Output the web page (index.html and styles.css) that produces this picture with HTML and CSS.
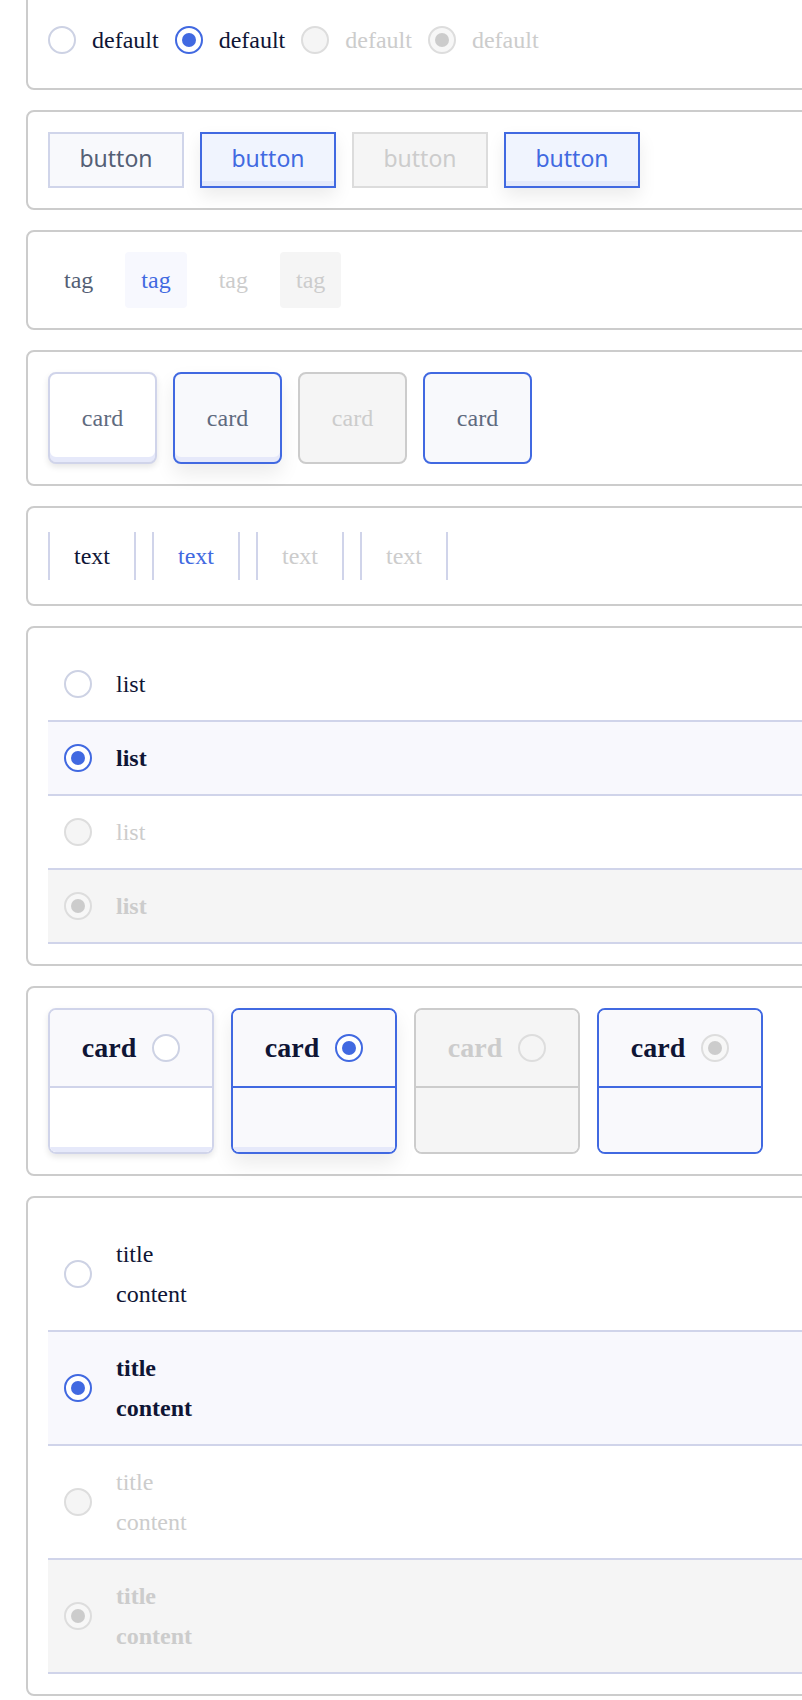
FILE: index.html
```html
<!DOCTYPE html>
<html lang="en">
<head>
<meta charset="utf-8">
<title>Selection states</title>
<link rel="stylesheet" href="styles.css">
</head>
<body>
<div class="page">

  <section class="panel">
    <div class="inline-row">
      <label class="opt"><span class="radio"></span><span>default</span></label>
      <label class="opt"><span class="radio on"></span><span>default</span></label>
      <label class="opt muted"><span class="radio dis"></span><span>default</span></label>
      <label class="opt muted"><span class="radio dis-on"></span><span>default</span></label>
    </div>
  </section>

  <section class="panel">
    <div class="inline-row">
      <button class="btn">button</button>
      <button class="btn active">button</button>
      <button class="btn disabled">button</button>
      <button class="btn active">button</button>
    </div>
  </section>

  <section class="panel">
    <div class="inline-row">
      <span class="tag">tag</span>
      <span class="tag active">tag</span>
      <span class="tag disabled">tag</span>
      <span class="tag disabled-on">tag</span>
    </div>
  </section>

  <section class="panel">
    <div class="inline-row card-row">
      <div class="card">card</div>
      <div class="card active">card</div>
      <div class="card disabled">card</div>
      <div class="card selected">card</div>
    </div>
  </section>

  <section class="panel">
    <div class="inline-row">
      <span class="seg">text</span>
      <span class="seg active">text</span>
      <span class="seg disabled">text</span>
      <span class="seg disabled">text</span>
    </div>
  </section>

  <section class="panel">
    <div class="list">
      <div class="list-row"><span class="radio"></span><span>list</span></div>
      <div class="list-row selected"><span class="radio on"></span><span>list</span></div>
      <div class="list-row disabled"><span class="radio dis"></span><span>list</span></div>
      <div class="list-row disabled-on"><span class="radio dis-on"></span><span>list</span></div>
    </div>
  </section>

  <section class="panel">
    <div class="rcard-row">
      <div class="rcard">
        <div class="rcard-head"><span>card</span><span class="radio"></span></div>
        <div class="rcard-body"></div>
      </div>
      <div class="rcard active">
        <div class="rcard-head"><span>card</span><span class="radio on"></span></div>
        <div class="rcard-body"></div>
      </div>
      <div class="rcard disabled">
        <div class="rcard-head"><span>card</span><span class="radio dis"></span></div>
        <div class="rcard-body"></div>
      </div>
      <div class="rcard selected">
        <div class="rcard-head"><span>card</span><span class="radio dis-on"></span></div>
        <div class="rcard-body"></div>
      </div>
    </div>
  </section>

  <section class="panel">
    <div class="list">
      <div class="tc-row"><span class="radio"></span><div class="tc-text"><div>title</div><div>content</div></div></div>
      <div class="tc-row selected"><span class="radio on"></span><div class="tc-text"><div>title</div><div>content</div></div></div>
      <div class="tc-row disabled"><span class="radio dis"></span><div class="tc-text"><div>title</div><div>content</div></div></div>
      <div class="tc-row disabled-on"><span class="radio dis-on"></span><div class="tc-text"><div>title</div><div>content</div></div></div>
    </div>
  </section>

</div>
</body>
</html>
```

FILE: styles.css
```css
html, body {
  margin: 0;
  padding: 0;
  background: #ffffff;
  overflow: hidden;
}

body {
  font-family: "Liberation Serif", "Times New Roman", serif;
  font-size: 24px;
  color: #0f1535;
}

.page {
  display: flex;
  flex-direction: column;
  gap: 20px;
  width: 840px;
  padding-left: 26px;
  margin-top: -10px;
}

.panel {
  border: 2px solid #cccccc;
  border-radius: 8px;
  padding: 20px;
}

.inline-row {
  display: flex;
  align-items: center;
  gap: 16px;
  height: 56px;
}

/* radio */
.radio {
  flex: none;
  box-sizing: border-box;
  width: 28px;
  height: 28px;
  border: 2px solid #cdd2e4;
  border-radius: 50%;
  background: #ffffff;
  display: flex;
  align-items: center;
  justify-content: center;
}
.radio.on {
  border-color: #4169e1;
}
.radio.on::after,
.radio.dis-on::after {
  content: "";
  width: 14px;
  height: 14px;
  border-radius: 50%;
  background: #4169e1;
}
.radio.dis {
  border-color: #dddddd;
  background: #f5f5f5;
}
.radio.dis-on {
  border-color: #dddddd;
  background: #f7f7f7;
}
.radio.dis-on::after {
  background: #cccccc;
}

.opt {
  display: flex;
  align-items: center;
  gap: 16px;
  line-height: 28px;
}
.opt.muted {
  color: #cccccc;
}

/* buttons */
.btn {
  box-sizing: border-box;
  width: 136px;
  height: 56px;
  margin: 0;
  padding: 0 0 3px;
  border: 2px solid #d0d5ea;
  border-radius: 0;
  background: #f8f9fc;
  font-family: "Noto Sans", "Open Sans", sans-serif;
  font-size: 23px;
  line-height: 1;
  color: #545f75;
  display: flex;
  align-items: center;
  justify-content: center;
}
.btn.active {
  border-color: #4169e1;
  background: #f0f4fe;
  color: #4169e1;
  box-shadow: inset 0 -5px 0 #e3e9fb, 0 8px 18px rgba(0, 0, 0, 0.08);
}
.btn.disabled {
  border-color: #dcdcdc;
  background: #f5f5f5;
  color: #cccccc;
}

/* tags */
.tag {
  height: 56px;
  padding: 0 16px;
  border-radius: 4px;
  display: flex;
  align-items: center;
  color: #545f75;
}
.tag.active {
  background: #f7f8fe;
  color: #4169e1;
}
.tag.disabled {
  color: #cccccc;
}
.tag.disabled-on {
  background: #f5f5f5;
  color: #cccccc;
}

/* cards */
.card-row {
  height: 92px;
}
.card {
  box-sizing: border-box;
  width: 109px;
  height: 92px;
  border: 2px solid #d0d4ea;
  border-radius: 8px;
  background: #ffffff;
  color: #5f6b80;
  display: flex;
  align-items: center;
  justify-content: center;
  box-shadow: inset 0 -5px 0 #e6e9fa, 0 3px 6px rgba(0, 0, 0, 0.1);
}
.card.active {
  border-color: #4169e1;
  background: #f8f9fc;
  box-shadow: inset 0 -5px 0 #e6e9fa, 0 10px 20px rgba(0, 0, 0, 0.08);
}
.card.disabled {
  border-color: #cccccc;
  background: #f5f5f5;
  color: #cccccc;
  box-shadow: none;
}
.card.selected {
  border-color: #4169e1;
  background: #f8f9fc;
  box-shadow: none;
}

/* text segments */
.seg {
  height: 48px;
  padding: 0 24px;
  border-left: 2px solid #d0d4ea;
  border-right: 2px solid #d0d4ea;
  display: flex;
  align-items: center;
}
.seg.active {
  color: #4169e1;
}
.seg.disabled {
  color: #cccccc;
}

/* list rows */
.list {
  display: flex;
  flex-direction: column;
}
.list-row {
  height: 72px;
  padding: 0 16px;
  display: flex;
  align-items: center;
  gap: 24px;
  border-bottom: 2px solid #d0d4ea;
}
.list-row.selected,
.tc-row.selected {
  background: #f8f8fd;
  font-weight: bold;
}
.list-row.disabled,
.tc-row.disabled {
  color: #cccccc;
}
.list-row.disabled-on,
.tc-row.disabled-on {
  background: #f5f5f5;
  color: #cccccc;
  font-weight: bold;
}

/* radio cards */
.rcard-row {
  display: flex;
  gap: 17px;
}
.rcard {
  width: 166px;
  box-sizing: border-box;
  border: 2px solid #d0d4ea;
  border-radius: 8px;
  overflow: hidden;
  box-shadow: 0 3px 6px rgba(0, 0, 0, 0.1);
}
.rcard-head {
  height: 76px;
  display: flex;
  align-items: center;
  justify-content: center;
  gap: 16px;
  border-bottom: 2px solid #d0d4ea;
  background: #f9f9fc;
  font-size: 28px;
  font-weight: bold;
}
.rcard-body {
  height: 64px;
  background: #ffffff;
  box-shadow: inset 0 -5px 0 #e6e9fa;
}
.rcard.active {
  border-color: #4169e1;
  box-shadow: 0 10px 20px rgba(0, 0, 0, 0.08);
}
.rcard.active .rcard-head,
.rcard.selected .rcard-head {
  border-bottom-color: #4169e1;
}
.rcard.active .rcard-body,
.rcard.selected .rcard-body {
  background: #f9f9fc;
}
.rcard.selected {
  border-color: #4169e1;
  box-shadow: none;
}
.rcard.selected .rcard-body {
  box-shadow: none;
}
.rcard.disabled {
  border-color: #cccccc;
  box-shadow: none;
  color: #cccccc;
}
.rcard.disabled .rcard-head {
  background: #f5f5f5;
  border-bottom-color: #cccccc;
}
.rcard.disabled .rcard-body {
  background: #f5f5f5;
  box-shadow: none;
}

/* title / content rows */
.tc-row {
  padding: 16px;
  display: flex;
  align-items: center;
  gap: 24px;
  border-bottom: 2px solid #d0d4ea;
}
.tc-text {
  line-height: 40px;
}
```
